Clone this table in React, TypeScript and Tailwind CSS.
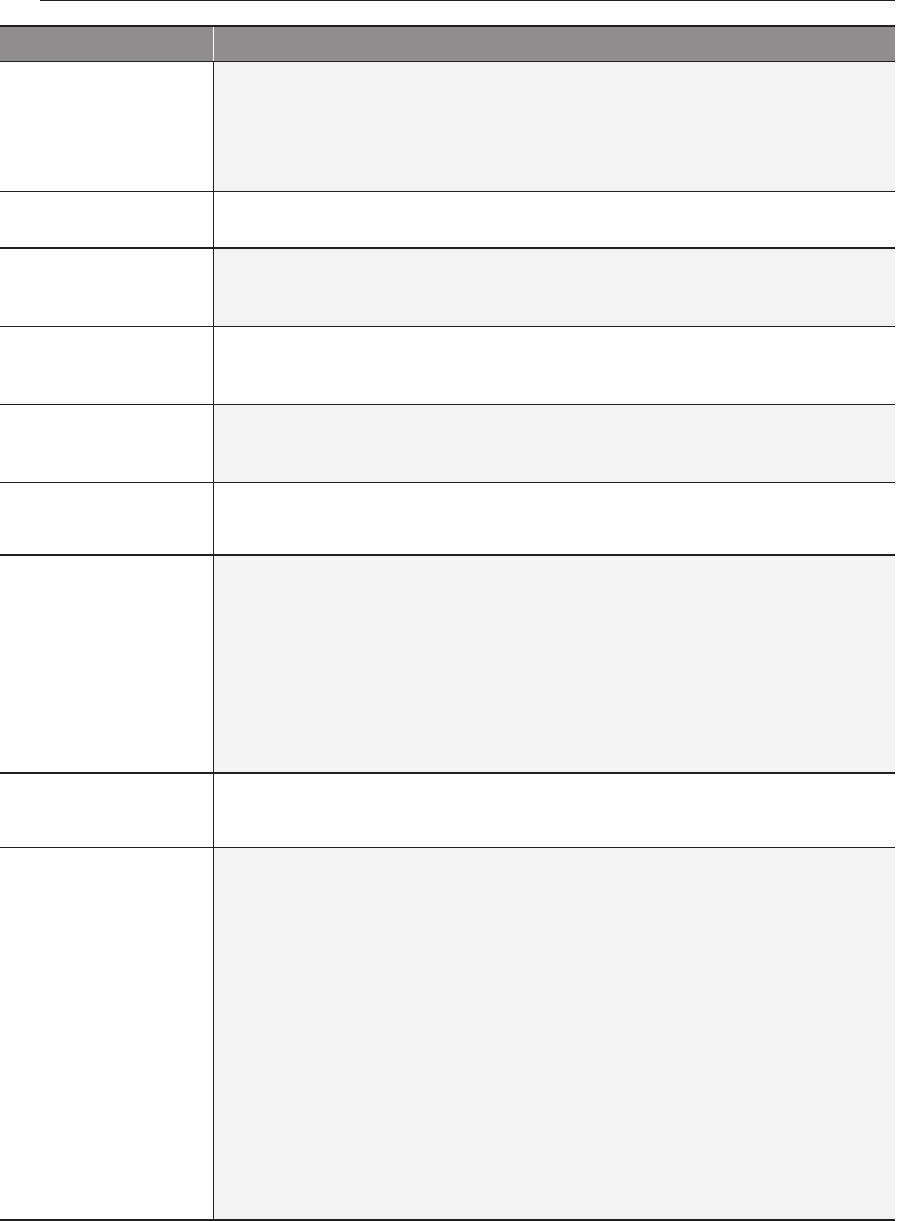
const rows = [
  { h: 'h-[129px]', line: 'border-b', shade: true },
  { h: 'h-[55px]', line: 'border-b-2', shade: false },
  { h: 'h-[77px]', line: 'border-b', shade: true },
  { h: 'h-[77px]', line: 'border-b', shade: false },
  { h: 'h-[77px]', line: 'border-b', shade: true },
  { h: 'h-[71px]', line: 'border-b-2', shade: false },
  { h: 'h-[216px]', line: 'border-b-2', shade: true },
  { h: 'h-[73px]', line: 'border-b', shade: false },
  { h: 'h-[371px]', line: 'border-b-2', shade: true },
];

export default function App() {
  return (
    <div className="w-[897px] h-[1221px] bg-white overflow-hidden font-['Liberation_Sans',sans-serif]">
      {/* running header rule */}
      <div className="ml-[40px] w-[855px] h-px bg-[#231f20]" />

      {/* table */}
      <div className="mt-[24px] w-[895px] border-t-2 border-[#231f20]">
        <div className="flex h-[35px] bg-[#8f8d8e] border-b border-[#231f20]">
          <div className="w-[214px] border-r border-white" />
          <div className="flex-1" />
        </div>

        {rows.map((r, i) => (
          <div key={i} className={`flex ${r.h} ${r.line} border-[#231f20] box-content`}>
            <div className="w-[214px] bg-white border-r border-[#231f20]" />
            <div className={`flex-1 ${r.shade ? 'bg-[#f3f3f3]' : 'bg-white'}`} />
          </div>
        ))}
      </div>
    </div>
  );
}
